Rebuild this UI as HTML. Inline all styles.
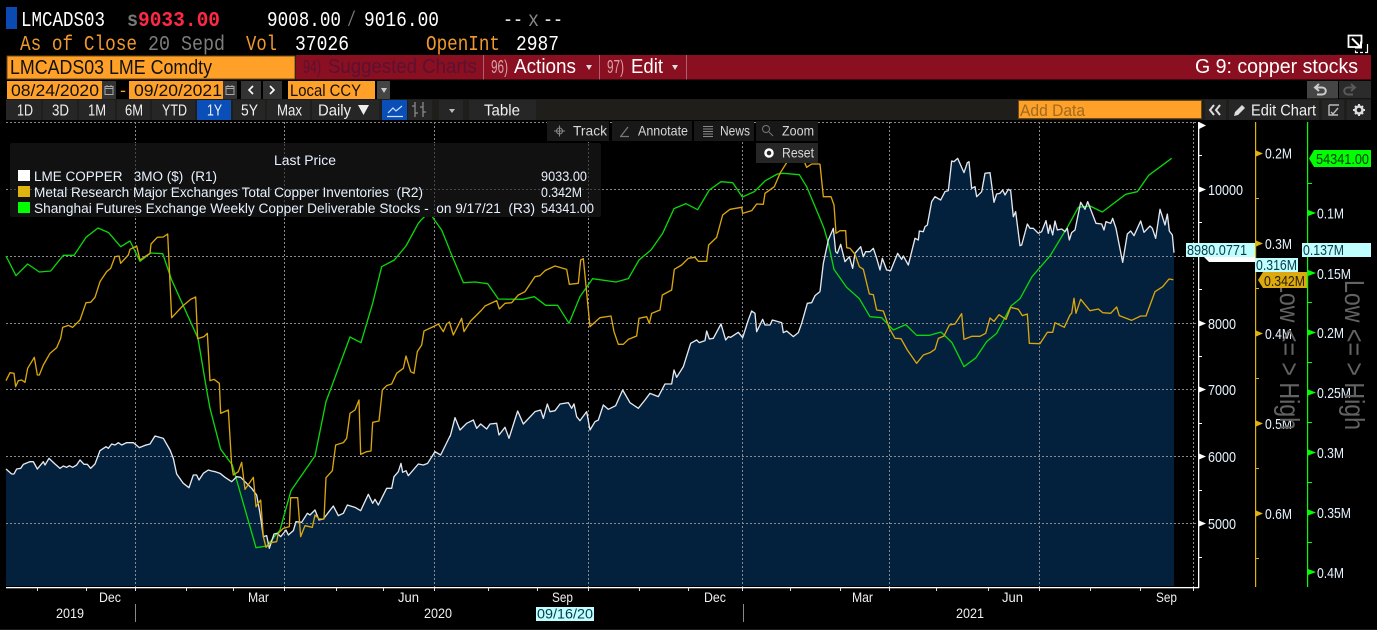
<!DOCTYPE html>
<html><head><meta charset="utf-8"><title>LMCADS03 chart</title>
<style>
html,body{margin:0;padding:0;background:#000;width:1377px;height:630px;overflow:hidden}
svg{display:block;position:absolute;left:0;top:0}
text{font-family:"Liberation Sans",sans-serif;white-space:pre}
.m{font-family:"Liberation Mono",monospace;font-size:21px}
.ax{font-size:15px;fill:#e6f3ff}
.t5{font-size:16px;fill:#f0f0f0}
.tb{font-size:14px;fill:#d8d8d8}
.lg{font-size:13.5px;fill:#e8f2ff}
.dt{font-size:14px;fill:#f0f0f0}
.grid{stroke:#8a8a8a;stroke-width:1;stroke-dasharray:2 2;fill:none}
.w{fill:none;stroke:#e4e8ee;stroke-width:4;stroke-linejoin:round}
.y{fill:none;stroke:#d9a60f;stroke-width:4;stroke-linejoin:round}
.g{fill:none;stroke:#0bd60b;stroke-width:4;stroke-linejoin:round}
.a{fill:#03203c;stroke:none}
</style></head>
<body>
<svg width="1377" height="630" viewBox="0 0 1377 630" xmlns="http://www.w3.org/2000/svg">
<rect width="1377" height="630" fill="#000"/>

<!-- header -->
<rect x="6" y="7" width="11" height="22" fill="#0b4ab2"/>
<text x="21" y="26" class="m" fill="#fff" textLength="84" lengthAdjust="spacingAndGlyphs">LMCADS03</text>
<text x="127" y="26" class="m" font-weight="bold" fill="#777" textLength="11" lengthAdjust="spacingAndGlyphs">s</text>
<text x="138" y="26" class="m" font-weight="bold" fill="#ff2845" textLength="82" lengthAdjust="spacingAndGlyphs">9033.00</text>
<text x="267" y="26" class="m" fill="#fff" textLength="74" lengthAdjust="spacingAndGlyphs">9008.00</text>
<text x="347" y="26" class="m" fill="#777" textLength="9" lengthAdjust="spacingAndGlyphs">/</text>
<text x="364" y="26" class="m" fill="#fff" textLength="75" lengthAdjust="spacingAndGlyphs">9016.00</text>
<text x="503" y="26" class="m" fill="#ddd" textLength="20" lengthAdjust="spacingAndGlyphs">--</text>
<text x="528" y="26" class="m" fill="#888" textLength="11" lengthAdjust="spacingAndGlyphs">x</text>
<text x="543" y="26" class="m" fill="#ddd" textLength="20" lengthAdjust="spacingAndGlyphs">--</text>

<text x="20" y="50" class="m" fill="#f0982e" textLength="117" lengthAdjust="spacingAndGlyphs">As of Close</text>
<text x="148" y="50" class="m" fill="#7d7d7d" textLength="77" lengthAdjust="spacingAndGlyphs">20 Sepd</text>
<text x="246" y="50" class="m" fill="#f0982e" textLength="31" lengthAdjust="spacingAndGlyphs">Vol</text>
<text x="295" y="50" class="m" fill="#fff" textLength="54" lengthAdjust="spacingAndGlyphs">37026</text>
<text x="426" y="50" class="m" fill="#f0982e" textLength="74" lengthAdjust="spacingAndGlyphs">OpenInt</text>
<text x="516" y="50" class="m" fill="#fff" textLength="43" lengthAdjust="spacingAndGlyphs">2987</text>

<!-- popout icon -->
<g fill="none" stroke="#fff">
<path d="M1360 47h-11.500v-11.500h13v8" stroke-width="1.800"/>
<path d="M1352 38.500l8.500 8.500M1361 41.500v6h-6" stroke-width="2"/>
<path d="M1367.500 44v8.500h-2.500M1363 52.500h-3M1358 52.500h-2.500v-2" stroke-width="1.200"/>
</g>

<!-- row 3 -->
<rect x="296" y="55" width="1075" height="24.500" fill="#8a0f20"/>
<rect x="7" y="56" width="288" height="23" fill="#ffa028" stroke="#6e4a10" stroke-width="1"/>
<text x="10" y="74" font-size="20" fill="#111" textLength="202" lengthAdjust="spacingAndGlyphs">LMCADS03 LME Comdty</text>
<text x="303" y="73" font-size="18" fill="#5c1032" textLength="18" lengthAdjust="spacingAndGlyphs">94)</text>
<text x="328" y="73" font-size="20" fill="#5c1032" textLength="149" lengthAdjust="spacingAndGlyphs">Suggested Charts</text>
<rect x="483" y="55" width="1" height="24.500" fill="#b0606c"/>
<text x="491" y="73" font-size="18" fill="#d8a0a8" textLength="17" lengthAdjust="spacingAndGlyphs">96)</text>
<text x="514" y="73" font-size="20" fill="#fff" textLength="62" lengthAdjust="spacingAndGlyphs">Actions</text>
<path d="M586 65h6l-3 5z" fill="#ddd"/>
<rect x="599" y="55" width="1" height="24.500" fill="#b0606c"/>
<text x="607" y="73" font-size="18" fill="#d8a0a8" textLength="17" lengthAdjust="spacingAndGlyphs">97)</text>
<text x="631" y="73" font-size="20" fill="#fff" textLength="32" lengthAdjust="spacingAndGlyphs">Edit</text>
<path d="M672 65h6l-3 5z" fill="#ddd"/>
<rect x="686" y="55" width="1" height="24.500" fill="#b0606c"/>
<text x="1195" y="73" font-size="20" fill="#fff" textLength="163" lengthAdjust="spacingAndGlyphs">G 9: copper stocks</text>

<!-- row 4 -->
<rect x="7" y="81" width="95" height="18" fill="#ffa028"/>
<text x="11" y="96" font-size="17" fill="#111" textLength="88" lengthAdjust="spacingAndGlyphs">08/24/2020</text>
<rect x="102" y="81" width="14" height="18" fill="#333"/>
<path d="M105 86.500h8v8h-8zM105 88.500h8M107 85v2M111 85v2" fill="none" stroke="#aaa"/>
<text x="120" y="96" font-size="17" fill="#ffa028" textLength="6" lengthAdjust="spacingAndGlyphs">-</text>
<rect x="129" y="81" width="94" height="18" fill="#ffa028"/>
<text x="134" y="96" font-size="17" fill="#111" textLength="88" lengthAdjust="spacingAndGlyphs">09/20/2021</text>
<rect x="223" y="81" width="14" height="18" fill="#333"/>
<path d="M226 86.500h8v8h-8zM226 88.500h8M228 85v2M232 85v2" fill="none" stroke="#aaa"/>
<rect x="241" y="81" width="20" height="18" fill="#333"/>
<path d="M253 86l-4 4 4 4" fill="none" stroke="#fff" stroke-width="1.600"/>
<rect x="263" y="81" width="19" height="18" fill="#333"/>
<path d="M270 86l4 4-4 4" fill="none" stroke="#fff" stroke-width="1.600"/>
<rect x="288" y="81" width="87" height="18" fill="#ffa028"/>
<text x="290" y="96" font-size="17" fill="#111" textLength="71" lengthAdjust="spacingAndGlyphs">Local CCY</text>
<rect x="377" y="81" width="13" height="18" fill="#444"/>
<path d="M381 88h6l-3 5z" fill="#ccc"/>
<rect x="1307" y="81" width="31" height="17.500" fill="#454545"/>
<rect x="1339" y="81" width="32" height="17.500" fill="#2b2b2b"/>
<path d="M1319 84l-4 3.500 4 3.500M1315 87.500h7c5 0 5 7 0 7h-5" fill="none" stroke="#ccc" stroke-width="2"/>
<path d="M1351 84l4 3.500-4 3.500M1355 87.500h-7c-5 0-5 7 0 7h5" fill="none" stroke="#5a5a5a" stroke-width="2"/>

<!-- row 5 -->
<rect x="6" y="99" width="1365" height="21" fill="#1f1e1b"/>
<g fill="#262626">
<rect x="6" y="100" width="35" height="20"/><rect x="43" y="100" width="34" height="20"/><rect x="79" y="100" width="36" height="20"/><rect x="117" y="100" width="33" height="20"/><rect x="152" y="100" width="43" height="20"/><rect x="233" y="100" width="32" height="20"/><rect x="267" y="100" width="43" height="20"/><rect x="312" y="100" width="67" height="20"/><rect x="408" y="100" width="24" height="20"/><rect x="439" y="100" width="24" height="20"/><rect x="469" y="100" width="67" height="20"/>
</g>
<rect x="197" y="100" width="34" height="20" fill="#0a4fb8"/>
<rect x="382" y="100" width="25" height="20" fill="#0a4fb8"/>
<text x="17" y="115.500" class="t5" textLength="16" lengthAdjust="spacingAndGlyphs">1D</text>
<text x="52" y="115.500" class="t5" textLength="17" lengthAdjust="spacingAndGlyphs">3D</text>
<text x="88" y="115.500" class="t5" textLength="18" lengthAdjust="spacingAndGlyphs">1M</text>
<text x="125" y="115.500" class="t5" textLength="18" lengthAdjust="spacingAndGlyphs">6M</text>
<text x="162" y="115.500" class="t5" textLength="25" lengthAdjust="spacingAndGlyphs">YTD</text>
<text x="207" y="115.500" class="t5" textLength="15" lengthAdjust="spacingAndGlyphs">1Y</text>
<text x="241" y="115.500" class="t5" textLength="17" lengthAdjust="spacingAndGlyphs">5Y</text>
<text x="277" y="115.500" class="t5" textLength="25" lengthAdjust="spacingAndGlyphs">Max</text>
<text x="318" y="115.500" class="t5" textLength="33" lengthAdjust="spacingAndGlyphs">Daily</text>
<path d="M358 105h11l-5.500 10z" fill="#eee"/>
<path d="M388 113l5-5 3 3 6-5M387 116.500h16" fill="none" stroke="#cfe0ff" stroke-width="1.200"/>
<path d="M415 102v15M423 102v15M412 106h3M423 112h3M415 113h3M420 107h3" fill="none" stroke="#8a8a8a" stroke-width="1.300"/>
<path d="M449 109h6l-3 4z" fill="#bbb"/>
<text x="484" y="115.500" class="t5" textLength="36" lengthAdjust="spacingAndGlyphs">Table</text>
<rect x="1018.500" y="100.500" width="183" height="18" fill="#ffa028" stroke="#6e4a10"/>
<text x="1020" y="116" font-size="16.500" fill="#a06a20" textLength="65" lengthAdjust="spacingAndGlyphs">Add Data</text>
<rect x="1205" y="100" width="21" height="20" fill="#262626"/>
<path d="M1214 105l-4 5 4 5M1220 105l-4 5 4 5" fill="none" stroke="#ddd" stroke-width="2"/>
<rect x="1229" y="100" width="90" height="20" fill="#262626"/>
<path d="M1234 116l1-4 7-7 3 3-7 7z" fill="#ddd"/>
<text x="1251" y="115.500" class="t5" textLength="65" lengthAdjust="spacingAndGlyphs">Edit Chart</text>
<rect x="1322" y="100" width="22" height="20" fill="#262626"/>
<path d="M1329 105h10M1329 105v10h9M1331 112l2 2 5-6" fill="none" stroke="#bbb" stroke-width="1.400"/>
<rect x="1347" y="100" width="24" height="20" fill="#262626"/>
<circle cx="1359" cy="110" r="3.500" fill="none" stroke="#ddd" stroke-width="2.500"/>
<path d="M1359 104v2.500M1359 113.500v2.500M1353 110h2.500M1362.500 110h2.500M1355 106l1.700 1.700M1361.300 112.300l1.700 1.700M1355 114l1.700-1.700M1361.300 107.700l1.700-1.700" stroke="#ddd" stroke-width="2"/>

<!-- area fill -->
<g shape-rendering="crispEdges">
<polygon class="a" transform="matrix(.33333 0 0 .33333 0 220)" points="18,1098 18,747 35,762 42,762 50,747 62,745 70,733 90,725 100,725 112,747 130,725 135,735 147,715 165,732 180,745 190,738 200,742 208,737 218,742 230,735 240,720 252,733 262,733 272,745 285,732 300,692 318,680 325,685 335,672 345,675 355,668 365,675 380,668 400,668 418,683 435,676 450,672 465,648 490,655 510,690 520,715 530,762 550,790 567,803 580,765 590,765 597,780 610,760 625,750 635,753 645,755 660,760 675,772 695,785 710,770 722,772 735,785 755,805 770,825 780,880 790,950 800,947 808,985 822,942 832,940 842,950 858,930 865,945 880,932 888,905 905,907 922,880 930,885 945,870 957,900 970,897 1000,858 1015,887 1030,880 1042,855 1065,862 1082,872 1105,823 1118,850 1125,838 1135,855 1160,805 1175,805 1182,770 1195,755 1203,730 1208,757 1218,752 1225,767 1255,732 1270,735 1283,730 1305,695 1322,705 1350,648 1350,1098"/>
<polygon class="a" transform="matrix(.33333 0 0 .33333 440 150)" points="30,1308 30,860 33,850 45,803 60,840 80,820 90,815 100,810 110,835 122,822 140,837 150,822 170,820 177,855 195,832 207,865 233,783 250,822 285,785 302,780 310,805 322,762 330,785 345,782 360,762 385,758 395,775 402,762 410,800 420,812 440,785 450,840 465,815 475,810 490,765 505,778 527,767 548,720 570,758 595,775 615,750 630,730 655,740 675,702 695,702 702,660 710,682 730,650 752,580 770,570 778,578 795,572 800,543 808,567 820,565 843,522 857,570 865,560 872,562 895,547 908,563 925,510 935,483 945,490 950,545 968,508 975,525 990,525 997,510 1025,518 1030,548 1040,543 1060,560 1075,548 1085,520 1102,460 1115,458 1125,437 1140,425 1140,1308"/>
<polygon class="a" transform="matrix(.33333 0 0 .33333 820 150)" points="0,1308 0,425 10,340 25,270 40,235 47,305 52,310 62,283 75,335 88,320 98,355 105,310 122,290 130,320 137,305 150,305 160,295 170,325 180,360 187,325 200,360 212,362 233,310 245,328 250,318 265,345 285,265 295,270 298,243 310,245 315,230 322,225 335,155 345,140 362,150 375,125 385,122 395,33 402,35 413,25 432,68 442,38 447,35 455,115 465,110 470,140 485,125 495,70 510,68 522,157 530,132 540,130 548,120 555,135 565,118 572,122 580,200 587,185 600,287 605,285 622,222 630,235 640,235 655,250 665,245 678,212 685,250 690,225 698,255 705,213 712,240 725,237 735,245 742,235 748,270 755,248 765,240 782,157 795,178 803,155 828,220 845,222 852,240 858,215 872,220 878,205 888,235 908,337 922,252 932,243 942,257 962,213 972,247 990,228 997,235 1007,265 1020,178 1035,225 1042,192 1048,243 1057,255 1062,308 1062,1308"/>
</g>

<!-- grid -->
<g class="grid">
<path d="M6 122.500H1198M6 189.500H1198M6 256.500H1198M6 323.500H1198M6 389.500H1198M6 456.500H1198M6 523.500H1198"/>
<path d="M135.500 122V587M284.500 122V587M434.500 122V587M588.500 122V587M742.500 122V587M889.500 122V587M1039.500 122V587M1193.500 122V587"/>
</g>

<!-- green -->
<g transform="matrix(.33333 0 0 .33333 0 220)"><polyline class="g" points="18,108 48,167 83,132 118,156 152,153 190,106 222,106 258,52 294,24 326,38 362,80 390,63 420,124 452,99 488,101 515,180 594,355 620,510 630,565 662,688 697,735 768,983 800,978 840,930 873,812 945,708 978,545 1050,351 1083,368 1118,250 1145,140 1183,120 1218,78 1255,10 1265,-2 1290,-25 1300,-5 1325,30 1350,92"/></g>
<g transform="matrix(.33333 0 0 .33333 440 150)"><polyline class="g" points="30,303 70,398 105,396 143,401 175,447 247,448 283,440 317,466 353,466 387,520 420,440 458,386 528,396 565,386 597,330 633,300 668,250 702,176 738,161 773,179 808,120 843,95 878,98 907,141 943,125 976,92 1012,72 1030,70 1078,74 1100,110 1140,205"/></g>
<g transform="matrix(.33333 0 0 .33333 820 150)"><polyline class="g" points="0,205 12,235 25,280 42,358 80,412 118,446 150,500 185,503 220,540 257,524 290,556 328,556 363,546 396,578 432,650 468,623 500,575 530,550 573,468 600,446 636,380 690,318 742,232 775,172 810,168 847,186 917,133 952,125 986,76 1055,25"/></g>

<!-- white -->
<g transform="matrix(.33333 0 0 .33333 0 220)"><polyline class="w" points="18,747 35,762 42,762 50,747 62,745 70,733 90,725 100,725 112,747 130,725 135,735 147,715 165,732 180,745 190,738 200,742 208,737 218,742 230,735 240,720 252,733 262,733 272,745 285,732 300,692 318,680 325,685 335,672 345,675 355,668 365,675 380,668 400,668 418,683 435,676 450,672 465,648 490,655 510,690 520,715 530,762 550,790 567,803 580,765 590,765 597,780 610,760 625,750 635,753 645,755 660,760 675,772 695,785 710,770 722,772 735,785 755,805 770,825 780,880 790,950 800,947 808,985 822,942 832,940 842,950 858,930 865,945 880,932 888,905 905,907 922,880 930,885 945,870 957,900 970,897 1000,858 1015,887 1030,880 1042,855 1065,862 1082,872 1105,823 1118,850 1125,838 1135,855 1160,805 1175,805 1182,770 1195,755 1203,730 1208,757 1218,752 1225,767 1255,732 1270,735 1283,730 1305,695 1322,705 1350,648"/></g>
<g transform="matrix(.33333 0 0 .33333 440 150)"><polyline class="w" points="30,860 33,850 45,803 60,840 80,820 90,815 100,810 110,835 122,822 140,837 150,822 170,820 177,855 195,832 207,865 233,783 250,822 285,785 302,780 310,805 322,762 330,785 345,782 360,762 385,758 395,775 402,762 410,800 420,812 440,785 450,840 465,815 475,810 490,765 505,778 527,767 548,720 570,758 595,775 615,750 630,730 655,740 675,702 695,702 702,660 710,682 730,650 752,580 770,570 778,578 795,572 800,543 808,567 820,565 843,522 857,570 865,560 872,562 895,547 908,563 925,510 935,483 945,490 950,545 968,508 975,525 990,525 997,510 1025,518 1030,548 1040,543 1060,560 1075,548 1085,520 1102,460 1115,458 1125,437 1140,425"/></g>
<g transform="matrix(.33333 0 0 .33333 820 150)"><polyline class="w" points="0,425 10,340 25,270 40,235 47,305 52,310 62,283 75,335 88,320 98,355 105,310 122,290 130,320 137,305 150,305 160,295 170,325 180,360 187,325 200,360 212,362 233,310 245,328 250,318 265,345 285,265 295,270 298,243 310,245 315,230 322,225 335,155 345,140 362,150 375,125 385,122 395,33 402,35 413,25 432,68 442,38 447,35 455,115 465,110 470,140 485,125 495,70 510,68 522,157 530,132 540,130 548,120 555,135 565,118 572,122 580,200 587,185 600,287 605,285 622,222 630,235 640,235 655,250 665,245 678,212 685,250 690,225 698,255 705,213 712,240 725,237 735,245 742,235 748,270 755,248 765,240 782,157 795,178 803,155 828,220 845,222 852,240 858,215 872,220 878,205 888,235 908,337 922,252 932,243 942,257 962,213 972,247 990,228 997,235 1007,265 1020,178 1035,225 1042,192 1048,243 1057,255 1062,308"/></g>

<!-- yellow -->
<g transform="matrix(.33333 0 0 .33333 0 220)"><polyline class="y" points="18,482 30,458 42,460 47,500 55,482 65,480 75,487 83,445 103,412 112,465 118,465 130,435 150,400 170,383 182,355 188,322 205,316 218,322 240,300 258,248 272,247 285,232 300,185 320,155 332,145 345,110 357,108 362,130 385,105 390,88 410,78 420,120 450,100 453,72 472,52 490,51 503,42 515,293 548,258 572,238 587,231 593,356 612,350 622,340 630,482 642,478 658,490 662,580 685,570 695,735 700,765 715,755 725,727 735,808 760,772 768,860 782,840 790,950 798,982 812,968 830,965 835,940 850,925 868,920 872,833 893,833 902,950 915,917 937,922 945,885 958,897 972,897 978,773 997,752 1007,675 1030,668 1040,655 1050,580 1065,570 1077,540 1082,703 1100,695 1113,693 1118,607 1137,603 1147,510 1160,497 1175,492 1190,460 1210,445 1218,408 1232,455 1242,460 1252,395 1265,375 1272,333 1300,320 1315,312 1330,335 1340,312 1350,305"/></g>
<g transform="matrix(.33333 0 0 .33333 440 150)"><polyline class="y" points="28,515 40,555 65,505 72,545 92,513 125,480 135,468 170,452 178,477 195,460 215,458 235,435 255,425 285,380 300,377 315,362 345,348 380,358 388,403 415,400 422,330 430,326 450,530 480,503 513,498 522,545 535,583 550,583 565,568 590,558 597,505 620,500 628,520 635,490 660,480 667,435 695,420 703,358 725,345 745,325 765,322 775,334 800,334 806,285 830,262 848,195 870,178 905,172 908,190 935,182 950,162 970,163 975,130 1003,110 1020,70 1045,30 1085,15 1100,52 1115,42 1140,42"/></g>
<g transform="matrix(.33333 0 0 .33333 820 150)"><polyline class="y" points="0,42 10,140 33,140 42,165 48,250 60,242 77,242 80,293 90,295 105,313 118,350 130,358 148,432 160,434 170,480 190,483 208,535 225,565 243,566 262,600 290,640 310,615 330,608 345,598 355,565 372,558 388,525 405,522 425,491 432,568 455,559 480,559 497,550 510,504 522,514 537,494 558,508 572,472 595,478 607,497 622,492 628,580 660,581 682,547 698,547 705,518 733,532 750,495 755,490 762,445 768,490 782,448 810,482 835,477 848,488 872,490 890,471 898,497 935,511 962,498 978,498 1005,425 1028,410 1047,387 1060,389"/></g>

<!-- chart toolbar -->
<g fill="#181818">
<rect x="547" y="121" width="62" height="20"/><rect x="612" y="121" width="80" height="20"/><rect x="694" y="121" width="60" height="20"/><rect x="756" y="121" width="62" height="20"/>
</g>
<rect x="756" y="143" width="62" height="20" fill="#262626"/>
<path d="M554 131h11M559.500 125.500v11" stroke="#888" stroke-width="1"/><circle cx="559.500" cy="131" r="3" fill="none" stroke="#888"/>
<text x="573" y="135.500" class="tb" textLength="34" lengthAdjust="spacingAndGlyphs">Track</text>
<path d="M621 136l7-9M620 136.500h9" stroke="#777" stroke-width="1.300" fill="none"/>
<text x="638" y="135.500" class="tb" textLength="50" lengthAdjust="spacingAndGlyphs">Annotate</text>
<path d="M703 126.500h10M703 129h10M703 131.500h10M703 134h10M703 136.500h10" stroke="#888"/>
<text x="720" y="135.500" class="tb" textLength="30" lengthAdjust="spacingAndGlyphs">News</text>
<circle cx="766" cy="129" r="3.500" fill="none" stroke="#777"/><path d="M769 132l4 4" stroke="#777"/>
<text x="782" y="135.500" class="tb" textLength="32" lengthAdjust="spacingAndGlyphs">Zoom</text>
<circle cx="769" cy="153" r="3.500" fill="none" stroke="#fff" stroke-width="2.500"/>
<text x="782" y="157.500" class="tb" textLength="32" lengthAdjust="spacingAndGlyphs">Reset</text>

<!-- legend -->
<rect x="10" y="143" width="591" height="74" rx="2" fill="#111"/>
<path class="grid" d="M135.500 144V217M284.500 144V217M434.500 144V217M588.500 144V217M10 189.500H600" opacity=".45"/>
<text x="274" y="165" class="lg" textLength="62" lengthAdjust="spacingAndGlyphs">Last Price</text>
<rect x="18" y="170" width="12" height="11" fill="#fff"/>
<rect x="18" y="186" width="12" height="11" fill="#e0b40f"/>
<rect x="18" y="202" width="12" height="11" fill="#0f0"/>
<text x="34" y="181" class="lg" textLength="183" lengthAdjust="spacingAndGlyphs">LME COPPER   3MO ($)  (R1)</text>
<text x="34" y="197" class="lg" textLength="389" lengthAdjust="spacingAndGlyphs">Metal Research Major Exchanges Total Copper Inventories  (R2)</text>
<text x="34" y="213" class="lg" textLength="501" lengthAdjust="spacingAndGlyphs">Shanghai Futures Exchange Weekly Copper Deliverable Stocks -  on 9/17/21  (R3)</text>
<text x="541" y="181" class="lg" textLength="46" lengthAdjust="spacingAndGlyphs">9033.00</text>
<text x="541" y="197" class="lg" textLength="41" lengthAdjust="spacingAndGlyphs">0.342M</text>
<text x="541" y="213" class="lg" textLength="53" lengthAdjust="spacingAndGlyphs">54341.00</text>

<!-- bottom axis -->
<rect x="6" y="587" width="1193" height="1.300" fill="#fff"/>
<path d="M37.500 588v3M86.500 588v3M135.500 588v3M186.500 588v3M233.500 588v3M284.500 588v3M336.500 588v3M383.500 588v3M434.500 588v3M488.500 588v3M537.500 588v3M588.500 588v3M639.500 588v3M688.500 588v3M742.500 588v3M790.500 588v3M840.500 588v3M889.500 588v3M936.500 588v3M988.500 588v3M1039.500 588v3M1090.500 588v3M1140.500 588v3M1193.500 588v3" stroke="#ddd"/>
<text x="99" y="602" class="dt" textLength="22" lengthAdjust="spacingAndGlyphs">Dec</text>
<text x="248" y="602" class="dt" textLength="21" lengthAdjust="spacingAndGlyphs">Mar</text>
<text x="398" y="602" class="dt" textLength="21" lengthAdjust="spacingAndGlyphs">Jun</text>
<text x="552" y="602" class="dt" textLength="21" lengthAdjust="spacingAndGlyphs">Sep</text>
<text x="704" y="602" class="dt" textLength="22" lengthAdjust="spacingAndGlyphs">Dec</text>
<text x="852" y="602" class="dt" textLength="21" lengthAdjust="spacingAndGlyphs">Mar</text>
<text x="1002" y="602" class="dt" textLength="21" lengthAdjust="spacingAndGlyphs">Jun</text>
<text x="1156" y="602" class="dt" textLength="21" lengthAdjust="spacingAndGlyphs">Sep</text>
<text x="56" y="618" class="dt" textLength="28" lengthAdjust="spacingAndGlyphs">2019</text>
<text x="424" y="618" class="dt" textLength="28" lengthAdjust="spacingAndGlyphs">2020</text>
<text x="956" y="618" class="dt" textLength="28" lengthAdjust="spacingAndGlyphs">2021</text>
<rect x="135" y="604" width="1" height="18" fill="#888"/>
<rect x="743" y="604" width="1" height="18" fill="#888"/>
<rect x="536" y="607" width="58" height="14" fill="#bfffff"/>
<text x="537" y="618.500" font-size="14" fill="#0a3a4a" textLength="56" lengthAdjust="spacingAndGlyphs">09/16/20</text>
<rect x="0" y="629" width="1377" height="1" fill="#1c1c1c"/>

<!-- right axes -->
<rect x="1198" y="122" width="1.300" height="466" fill="#fff"/>
<rect x="1255" y="122" width="1.200" height="465" fill="#e0b40f"/>
<rect x="1307" y="122" width="1.200" height="465" fill="#0f0"/>
<path d="M1199 155.500h3M1199 222.500h3M1199 289.500h3M1199 356.500h3M1199 423.500h3M1199 490.500h3M1199 557.500h3" stroke="#fff"/>
<path d="M1199 186.500v6l7-3zM1199 320.500v6l7-3zM1199 386.500v6l7-3zM1199 453.500v6l7-3zM1199 520.500v6l7-3z" fill="#fff"/>
<path d="M1199 122v7l7-3.500z" fill="#fff"/>
<text x="1208" y="195" class="ax" textLength="35" lengthAdjust="spacingAndGlyphs">10000</text>
<text x="1208" y="329" class="ax" textLength="28" lengthAdjust="spacingAndGlyphs">8000</text>
<text x="1208" y="395" class="ax" textLength="28" lengthAdjust="spacingAndGlyphs">7000</text>
<text x="1208" y="462" class="ax" textLength="28" lengthAdjust="spacingAndGlyphs">6000</text>
<text x="1208" y="529" class="ax" textLength="28" lengthAdjust="spacingAndGlyphs">5000</text>

<path d="M1256 198.500h3M1256 288.500h3M1256 378.500h3M1256 468.500h3M1256 558.500h3" stroke="#e0b40f"/>
<path d="M1256 150.500v6l7-3zM1256 240.500v6l7-3zM1256 330.500v6l7-3zM1256 420.500v6l7-3zM1256 510.500v6l7-3z" fill="#e0b40f"/>
<text x="1265" y="158.500" class="ax" textLength="27" lengthAdjust="spacingAndGlyphs">0.2M</text>
<text x="1265" y="249" class="ax" textLength="27" lengthAdjust="spacingAndGlyphs">0.3M</text>
<text x="1265" y="339" class="ax" textLength="27" lengthAdjust="spacingAndGlyphs">0.4M</text>
<text x="1265" y="429" class="ax" textLength="27" lengthAdjust="spacingAndGlyphs">0.5M</text>
<text x="1265" y="519" class="ax" textLength="27" lengthAdjust="spacingAndGlyphs">0.6M</text>

<path d="M1308 183.500h4M1308 302.500h4M1308 362.500h4M1308 422.500h4M1308 482.500h4M1308 542.500h4" stroke="#0f0"/>
<path d="M1308 210v6l8-3zM1308 270v6l8-3zM1308 329.500v6l8-3zM1308 389.500v6l8-3zM1308 449.500v6l8-3zM1308 509.500v6l8-3zM1308 569v6l8-3z" fill="#0f0"/>
<text x="1317" y="218.500" class="ax" textLength="27" lengthAdjust="spacingAndGlyphs">0.1M</text>
<text x="1317" y="279" class="ax" textLength="34" lengthAdjust="spacingAndGlyphs">0.15M</text>
<text x="1317" y="338" class="ax" textLength="27" lengthAdjust="spacingAndGlyphs">0.2M</text>
<text x="1317" y="398" class="ax" textLength="34" lengthAdjust="spacingAndGlyphs">0.25M</text>
<text x="1317" y="458" class="ax" textLength="27" lengthAdjust="spacingAndGlyphs">0.3M</text>
<text x="1317" y="518" class="ax" textLength="34" lengthAdjust="spacingAndGlyphs">0.35M</text>
<text x="1317" y="578" class="ax" textLength="27" lengthAdjust="spacingAndGlyphs">0.4M</text>

<!-- low / high -->
<text transform="translate(1280 280) rotate(90)" font-size="28" fill="#636363" textLength="150" lengthAdjust="spacingAndGlyphs">Low &lt;= &gt; High</text>
<text transform="translate(1345 280) rotate(90)" font-size="28" fill="#636363" textLength="150" lengthAdjust="spacingAndGlyphs">Low &lt;= &gt; High</text>

<!-- tags -->
<path d="M1204 257h51v5h-46z" fill="#fff"/>
<rect x="1186" y="243" width="69" height="14" fill="#bfffff"/>
<text x="1187" y="255" font-size="15" fill="#0a3a4a" textLength="60" lengthAdjust="spacingAndGlyphs">8980.0771</text>
<rect x="1255" y="258" width="43" height="14" fill="#bfffff"/>
<text x="1256" y="270" font-size="15" fill="#0a3a4a" textLength="41" lengthAdjust="spacingAndGlyphs">0.316M</text>
<path d="M1258 280l5-8h44v16h-44z" fill="#dcaa10"/>
<text x="1264" y="286" font-size="15" fill="#2a2000" textLength="41" lengthAdjust="spacingAndGlyphs">0.342M</text>
<rect x="1302" y="243" width="69" height="14" fill="#bfffff"/>
<text x="1303" y="255" font-size="15" fill="#0a3a4a" textLength="41" lengthAdjust="spacingAndGlyphs">0.137M</text>
<path d="M1309 158.500l5-8.500h57v17h-57z" fill="#0f0"/>
<text x="1316" y="164" font-size="15" fill="#063a06" textLength="53" lengthAdjust="spacingAndGlyphs">54341.00</text>
</svg>
</body></html>
